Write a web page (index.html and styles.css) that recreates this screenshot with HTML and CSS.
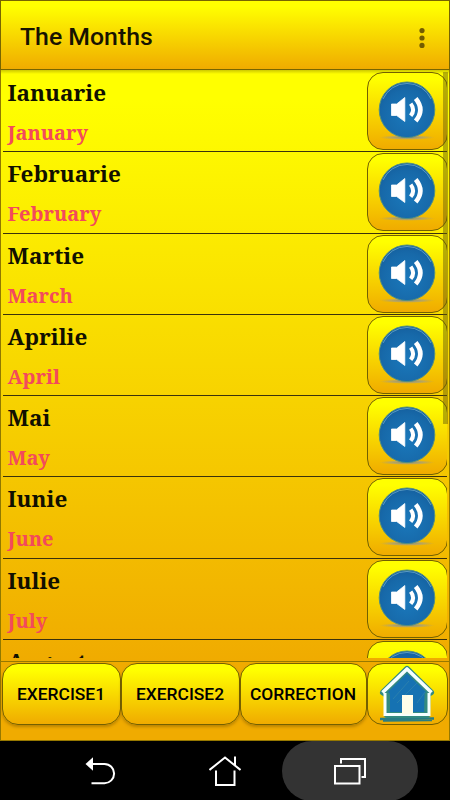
FILE: index.html
```html
<!DOCTYPE html>
<html lang="ro">
<head>
<meta charset="utf-8">
<title>The Months</title>
<link rel="stylesheet" href="styles.css">
</head>
<body>
<svg class="defs" width="0" height="0" aria-hidden="true">
  <defs>
    <radialGradient id="ball" cx=".5" cy=".6" r=".6">
      <stop offset="0" stop-color="#1a78bb"/><stop offset=".75" stop-color="#1769a9"/><stop offset="1" stop-color="#15609f"/>
    </radialGradient>
    <radialGradient id="shade"><stop offset="0" stop-color="#8d8c72"/><stop offset=".6" stop-color="#b0a470" stop-opacity=".8"/><stop offset="1" stop-color="#c8a840" stop-opacity="0"/></radialGradient>
    <symbol id="speaker" viewBox="0 0 60 60">
      <ellipse cx="30" cy="57.5" rx="28" ry="2.4" fill="url(#shade)"/>
      <circle cx="30" cy="29.8" r="27.8" fill="url(#ball)" stroke="#528f83" stroke-width="1"/>
      <path d="M6 19A26.3 26.3 0 0 1 54 19" fill="none" stroke="#6ba9c9" stroke-width="1" opacity=".8"/>
      <path d="M14.5 24h5.2L27.8 17.5V41.5L19.7 35.5h-5.2z" fill="#fff" stroke="#fff" stroke-width=".8" stroke-linejoin="round"/>
      <path d="M33.7 23.6Q38.5 29.8 33.7 35.8" fill="none" stroke="#fff" stroke-width="4"/>
      <path d="M38.7 18.5Q48 29.8 38.7 41" fill="none" stroke="#fff" stroke-width="4.6"/>
    </symbol>
  </defs>
</svg>
<div class="screen">
  <header class="bar">
    <h1>The Months</h1>
    <svg class="more" width="6" height="20" viewBox="0 0 6 20"><g fill="#735c00"><circle cx="3" cy="2.6" r="2.6"/><circle cx="3" cy="10" r="2.6"/><circle cx="3" cy="17.4" r="2.6"/></g></svg>
  </header>
  <main class="list">
    <div class="rows">
      <div class="row"><div class="words"><b>Ianuarie</b><i>January</i></div><button class="play"><svg><use href="#speaker"/></svg></button></div>
      <div class="row"><div class="words"><b>Februarie</b><i>February</i></div><button class="play"><svg><use href="#speaker"/></svg></button></div>
      <div class="row"><div class="words"><b>Martie</b><i>March</i></div><button class="play"><svg><use href="#speaker"/></svg></button></div>
      <div class="row"><div class="words"><b>Aprilie</b><i>April</i></div><button class="play"><svg><use href="#speaker"/></svg></button></div>
      <div class="row"><div class="words"><b>Mai</b><i>May</i></div><button class="play"><svg><use href="#speaker"/></svg></button></div>
      <div class="row"><div class="words"><b>Iunie</b><i>June</i></div><button class="play"><svg><use href="#speaker"/></svg></button></div>
      <div class="row"><div class="words"><b>Iulie</b><i>July</i></div><button class="play"><svg><use href="#speaker"/></svg></button></div>
      <div class="row"><div class="words"><b>August</b></div><button class="play"><svg><use href="#speaker"/></svg></button></div>
    </div>
    <div class="thumb"></div>
  </main>
  <footer class="actions">
    <button class="act">EXERCISE1</button>
    <button class="act">EXERCISE2</button>
    <button class="act wide">CORRECTION</button>
    <button class="act home">
      <svg width="60" height="60" viewBox="0 0 60 60">
        <path d="M3 56l54-.5M6 57.5l49-.5" stroke="#287c83" stroke-width="2.4"/>
        <path d="M30 6L54 29.5L50.5 31.5L50 52H10V32L6 29.5z" fill="#1672b2" stroke="#338a80" stroke-width="6" stroke-linejoin="round"/>
        <path d="M16 36l16-18M20 40l20-20M40 40l8-11" stroke="#4e98a7" stroke-width=".8" opacity=".45"/>
        <path d="M5.5 29.5L30 6L54.5 29.5" fill="none" stroke="#f5ffff" stroke-width="3.6" stroke-linejoin="round"/>
        <path d="M8 30V51.5H52V30" fill="none" stroke="#f5ffff" stroke-width="3"/>
        <path d="M25 32h11v19.5H25z" fill="#fffde9"/>
      </svg>
    </button>
  </footer>
  <nav class="nav">
    <div class="key"><svg width="32" height="30" viewBox="0 0 32 30"><path d="M8 8H20.5A9.3 9.3 0 0 1 20.5 27.2H7.5" fill="none" stroke="#fff" stroke-width="2"/><path d="M1.5 8L9 1.2V14.8z" fill="#fff"/></svg></div>
    <div class="key"><svg width="32" height="30" viewBox="0 0 32 30" fill="none" stroke="#fff" stroke-width="2"><path d="M.5 14L16 1.5L31.5 14M26 .5v9M7 14.5v14.500H25.500V14.500"/></svg></div>
    <div class="key active"><svg width="34" height="28" viewBox="0 0 34 28" fill="none" stroke="#fff" stroke-width="2"><path d="M2 9h24.500v17.500H2zM8 6.500V2h24v18h-3.500"/></svg></div>
  </nav>
</div>
</body>
</html>
```
FILE: styles.css
```css
* { box-sizing: border-box; }
body { margin: 0; background: #000; font-family: Roboto, sans-serif; }
button { margin: 0; padding: 0; font-family: inherit; color: #000; }
svg { display: block; }
.defs { position: absolute; }
.screen { width: 450px; height: 800px; overflow: hidden; display: flex; flex-direction: column; }
.bar {
  flex: 0 0 70px; display: flex; align-items: center; justify-content: space-between;
  padding: 3px 25px 0 19px; border: 1px solid #776500;
  background: linear-gradient(#ffff00 8%, #f0ab00);
}
.bar h1 { margin: 0; font-size: 24.8px; font-weight: 500; line-height: 30px; color: #171300; }
.more { margin: 3px -1px 0 0; }
.list {
  flex: 0 0 590px; position: relative; padding: 1px 2px 3px;
  border: solid #8f7800; border-width: 0 1px;
  background: linear-gradient(rgba(90, 75, 0, .3), transparent 4px), linear-gradient(#ffff00 5%, #f0ab00);
}
.rows { height: 587px; overflow: hidden; }
.row {
  height: 81.25px; display: flex; justify-content: space-between;
  padding-top: 1px; border-bottom: 1px solid #3a310c;
}
.words { padding: 8px 0 0 4.5px; display: flex; flex-direction: column; align-items: flex-start; font-family: "Noto Serif", "Droid Serif", "DejaVu Serif Condensed", "DejaVu Serif", serif; }
.words b { font-size: 22.5px; font-weight: 700; line-height: 26px; color: #111000; }
.words i { margin-top: 15px; font-style: normal; font-weight: 700; font-size: 20px; line-height: 24px; color: #f34a5c; }
.play {
  width: 81px; height: 78px; margin-right: -1px; display: flex; align-items: center; justify-content: center;
  border: 1px solid #716000; border-radius: 16px; background: linear-gradient(#ffff00 8%, #f0ab00);
}
.play svg { width: 60px; height: 60px; margin: -2px 0 0 -2px; }
.thumb { position: absolute; right: 1px; top: 2px; width: 5px; height: 352px; background: rgba(105, 95, 10, .48); }
.actions {
  flex: 0 0 80px; display: flex; align-items: flex-start; padding: 1px 1px 0 1px;
  border: 1px solid #967800; background: #f0ab00;
}
.act {
  width: 119px; height: 62px; display: flex; align-items: center; justify-content: center;
  border: 1px solid #746000; border-radius: 16px; background: linear-gradient(#ffff00 10%, #f0ab00);
  font-size: 17.4px; font-weight: 500; padding-right: 1px; box-shadow: 0 2px 3px rgba(90, 60, 0, .35);
}
.wide { width: 127px; }
.home { width: 81px; box-shadow: none; padding: 0 2px 2px 0; }
.nav { flex: 0 0 60px; display: flex; align-items: stretch; padding-left: 32px; background: #000; }
.key { width: 136px; display: flex; align-items: center; justify-content: center; }
.key:nth-child(2) { width: 114px; }
.active { border-radius: 30px; background: #333; }
```
